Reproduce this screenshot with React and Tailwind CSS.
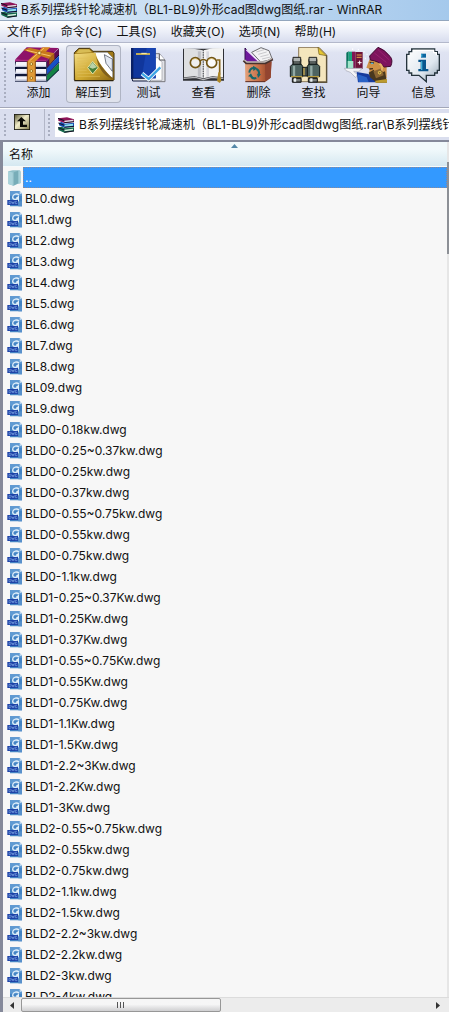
import React, { useState } from 'react';

const files = [
  'BL0.dwg', 'BL1.dwg', 'BL2.dwg', 'BL3.dwg', 'BL4.dwg', 'BL5.dwg', 'BL6.dwg', 'BL7.dwg', 'BL8.dwg',
  'BL09.dwg', 'BL9.dwg',
  'BLD0-0.18kw.dwg', 'BLD0-0.25~0.37kw.dwg', 'BLD0-0.25kw.dwg', 'BLD0-0.37kw.dwg',
  'BLD0-0.55~0.75kw.dwg', 'BLD0-0.55kw.dwg', 'BLD0-0.75kw.dwg', 'BLD0-1.1kw.dwg',
  'BLD1-0.25~0.37Kw.dwg', 'BLD1-0.25Kw.dwg', 'BLD1-0.37Kw.dwg', 'BLD1-0.55~0.75Kw.dwg',
  'BLD1-0.55Kw.dwg', 'BLD1-0.75Kw.dwg', 'BLD1-1.1Kw.dwg', 'BLD1-1.5Kw.dwg',
  'BLD1-2.2~3Kw.dwg', 'BLD1-2.2Kw.dwg', 'BLD1-3Kw.dwg',
  'BLD2-0.55~0.75kw.dwg', 'BLD2-0.55kw.dwg', 'BLD2-0.75kw.dwg', 'BLD2-1.1kw.dwg',
  'BLD2-1.5kw.dwg', 'BLD2-2.2~3kw.dwg', 'BLD2-2.2kw.dwg', 'BLD2-3kw.dwg', 'BLD2-4kw.dwg',
];

const menus = ['文件(F)', '命令(C)', '工具(S)', '收藏夹(O)', '选项(N)', '帮助(H)'];

function BooksIcon() {
  return (
    <svg className="h-4 w-[18px] shrink-0" viewBox="0 0 54 48" aria-hidden="true">
      <path d="M4 4 L30 1 L51 7 V15 L22 18 L4 11Z" fill="#8d1458" />
      <path d="M22 11 L49 8 V14 L22 16Z" fill="#e7dce4" />
      <path d="M6 17 L14 15 L24 20 L51 17 V29 L22 32 L6 25Z" fill="#164fb5" />
      <path d="M22 23 L48 20 V26 L22 29Z" fill="#8fe2ec" />
      <path d="M4 31 L14 29 L24 34 L51 31 V43 L22 47 L4 39Z" fill="#12664a" />
      <path d="M22 38 L48 35 V40 L22 43Z" fill="#d9f0e0" />
      <path d="M3 4 L22 11 M4 18 L22 25 M3 32 L22 39 M22 17 L51 14 M22 31 L51 28 M22 46 L51 42" stroke="#171126" strokeWidth="3" fill="none" />
    </svg>
  );
}

function FolderIcon() {
  return (
    <svg className="h-4 w-4 shrink-0" viewBox="0 0 48 48" aria-hidden="true">
      <path d="M4 4 L17 1 H37 Q41 2 41 6 V40 L31 42 L20 47 L4 42Z" fill="#8fbfc9" />
      <path d="M4 4 L19 8 V47 L4 42Z" fill="#a9d2da" />
      <path d="M21 7 L33 2 V40 L21 46Z" fill="#78adb8" />
      <path d="M35 4 H40 V39 L35 40Z" fill="#a6d0d8" />
      <path d="M19 8 V47" stroke="#8ab6c0" strokeWidth="2" />
    </svg>
  );
}

function DwgIcon() {
  return (
    <svg className="h-4 w-4 shrink-0" viewBox="0 0 48 48" aria-hidden="true">
      <path d="M9 1 H38 L45 8 V46 H9Z" fill="#4484c4" />
      <path d="M9 1 H38 L45 8 V14 H9Z" fill="#5f9ad2" />
      <path d="M38 1 L45 8 H38Z" fill="#d3e6f7" />
      <path d="M36 12 C31 7 18 8 17 18 C17 27 29 28 33 20 L28 20 M34 14 V28 C33 36 26 36 23 34" fill="none" stroke="#e0effa" strokeWidth="4" />
      <path d="M34 31 H45 V46 H34Z" fill="#5790cb" />
      <rect x="1" y="27" width="32" height="15" fill="#1c41a6" />
      <path d="M6 31 V38 H10 L12 35 L10 31Z M14 31 L16 38 L18 33 L20 38 L22 31 M30 31 H25 V38 H30 V35" fill="none" stroke="#7ea6e4" strokeWidth="2" />
    </svg>
  );
}

function AddArt() {
  return (
    <>
      <path d="M80 142 L176 144 L140 183 L45 179Z" fill="#8e1269" />
      <path d="M140 183 L177 145 V165 L140 204Z" fill="#5f0b50" />
      <path d="M140 205 L177 167 V187 L140 224Z" fill="#1650c8" />
      <path d="M140 226 L177 189 V210 L140 245Z" fill="#138244" />
      <path d="M140 204 L177 165 M140 225 L177 187 M140 245 L177 209" stroke="#0b1038" strokeWidth="3" />
      <path d="M45 180 H140 V245 H45Z" fill="#101838" />
      <path d="M48 186 H138 V201 H45Z M48 207 H138 V222 H45Z M48 229 H138 V242 H45Z" fill="#f4f4fa" />
      <path d="M45 199 H138 M45 220 H138 M45 240 H138" stroke="#b5b9cf" strokeWidth="3" />
      <path d="M45 182 H140" stroke="#b02a84" strokeWidth="5" />
      <path d="M83 182 L128 142 H151 L107 184Z" fill="#d98a24" />
      <path d="M70 150 L88 143 L163 160 L146 176Z" fill="#c87a1c" />
      <path d="M82 183 H106 V245 H82Z" fill="#e09a36" />
      <path d="M82 183 V245 M106 183 V245" stroke="#8d4f12" strokeWidth="3" />
      <path d="M148 174 L163 160 V178 L148 194Z" fill="#a96113" />
      <path d="M88 183 L132 144 M80 151 L152 168" stroke="#f7c46a" strokeWidth="3" />
      <g fill="#fff3a6" stroke="#805006" strokeWidth="2">
        <circle cx="94" cy="192" r="4" />
        <circle cx="94" cy="213" r="4" />
        <circle cx="94" cy="234" r="4" />
        <circle cx="118" cy="159" r="5" />
      </g>
    </>
  );
}

function ExtractArt() {
  return (
    <>
      <defs>
        <linearGradient id="gold" x1="0" y1="0" x2="1" y2="1">
          <stop offset="0" stopColor="#f3dc82" />
          <stop offset="0.55" stopColor="#cda62e" />
          <stop offset="1" stopColor="#8a6410" />
        </linearGradient>
      </defs>
      <path d="M223 158 L237 145 H269 L279 154 H338 L342 160 V240 H223Z" fill="#a17a18" stroke="#40300a" strokeWidth="3" />
      <path d="M282 157 H322 L338 173 V232 H300Z" fill="#fff" stroke="#7c808c" strokeWidth="2" />
      <path d="M313 164 L337 177 V214 L318 190Z" fill="#e2e8f2" stroke="#38404e" strokeWidth="2" />
      <path d="M223 162 L287 158 C289 180 316 215 341 238 L338 243 H226Z" fill="url(#gold)" />
      <path d="M285 158 C289 180 315 217 341 238 C318 233 304 215 295 196Z" fill="#80601c" />
      <path d="M238 148 H267 L276 157 L228 160Z" fill="#d8bc55" />
      <path d="M232 175 H272 M232 184 H262 M232 193 H258 M232 202 H255 M232 211 H260 M232 220 H275 M232 229 H300" stroke="#dfc05a" strokeWidth="2" />
      <path d="M278 184 L294 203 L278 222 L263 203Z" fill="#47813a" stroke="#e8e0a5" strokeWidth="3" />
      <path d="M278 187 L290 202 L278 206 L267 202Z" fill="#b9d2a8" />
      <path d="M223 242 H340" stroke="#2d230b" strokeWidth="4" />
    </>
  );
}

function TestArt() {
  return (
    <>
      <path d="M446 161 H478 L495 180 V245 H446Z" fill="#e2e3e8" stroke="#77777d" strokeWidth="3" />
      <path d="M455 173 H474 L486 187 V241 H455Z" fill="#fff" stroke="#9a9aa2" strokeWidth="2" />
      <path d="M478 161 V180 H495" fill="#fff" stroke="#4f5056" strokeWidth="3" />
      <path d="M393 144 H467 V235 H393Z" fill="#10369c" />
      <path d="M393 144 H400 V237 H393Z" fill="#092065" />
      <path d="M440 144 H467 V235 H425Z" fill="#1743b1" />
      <path d="M396 235 H450 V243 H398Z" fill="#e4e4e4" stroke="#111a40" strokeWidth="3" />
      <path d="M408 162 H450" stroke="#e5c34a" strokeWidth="5" />
      <path d="M424 160 H440" stroke="#fff5b5" strokeWidth="3" />
      <path d="M426 221 L446 237 L481 202" fill="none" stroke="#fff" strokeWidth="12" />
      <path d="M426 221 L446 237 L481 202" fill="none" stroke="#3ca5e4" strokeWidth="7" />
    </>
  );
}

function ViewArt() {
  return (
    <>
      <path d="M549 146 H672 V242 H549Z" fill="#2f3035" />
      <path d="M552 144 L580 146 L610 151 V235 L584 229 L552 232Z" fill="#dedfe1" />
      <path d="M610 151 L638 145 L669 144 V232 L637 229 L610 235Z" fill="#f2f2f2" />
      <path d="M551 235 L587 232 L610 239 L635 232 L670 235" fill="none" stroke="#b9b9bb" strokeWidth="4" />
      <path d="M610 149 V240" stroke="#66676b" strokeWidth="4" strokeDasharray="4 3" />
      <path d="M598 154 V230" stroke="#bfc0c5" strokeWidth="9" />
      <path d="M623 154 V230" stroke="#d6d7dc" strokeWidth="8" />
      <path d="M600 183 Q610 174 620 183" fill="none" stroke="#725514" strokeWidth="5" />
      <circle cx="586" cy="188" r="15" fill="#eee" stroke="#715414" strokeWidth="5" />
      <circle cx="635" cy="188" r="15" fill="#fafafa" stroke="#715414" strokeWidth="5" />
      <path d="M576 179 Q586 172 594 179 M625 179 Q635 172 643 179" fill="none" stroke="#e8c565" strokeWidth="2" />
      <path d="M650 180 H659 V224" fill="none" stroke="#89651a" strokeWidth="5" />
      <path d="M655 217 L651 243 L659 249 L664 243 L660 217Z" fill="#ac8627" />
    </>
  );
}

function DeleteArt() {
  return (
    <>
      <defs>
        <linearGradient id="bin" x1="0" y1="0" x2="1" y2="0">
          <stop offset="0" stopColor="#e3a27c" />
          <stop offset="0.55" stopColor="#c46c44" />
          <stop offset="1" stopColor="#8a3c22" />
        </linearGradient>
      </defs>
      <path d="M60 144 L103 187 H60Z" fill="#6e1a9c" stroke="#35104f" strokeWidth="3" />
      <path d="M64 149 L103 186" stroke="#f6e7ff" strokeWidth="4" />
      <path d="M80 157 L108 143 L132 152 L142 178 L107 186Z" fill="#f3f3f4" stroke="#6e6e72" strokeWidth="3" />
      <path d="M94 156 L117 149 M100 163 L125 156 M106 170 L131 164 M111 177 L136 171" stroke="#b2b2b7" strokeWidth="2" />
      <path d="M60 190 H122 L139 184 L137 233 L121 245 H61Z" fill="url(#bin)" />
      <path d="M120 192 L140 184 L137 233 L121 245Z" fill="#934530" />
      <path d="M56 181 L64 189 H121 L143 177" fill="none" stroke="#47322e" strokeWidth="8" />
      <path d="M58 179 L66 186 H119 L141 175" fill="none" stroke="#c2bab8" strokeWidth="4" />
      <g fill="none" stroke="#16676b" strokeWidth="6">
        <path d="M73 218 Q74 204 87 204" />
        <path d="M94 207 Q104 211 102 224" />
        <path d="M94 234 Q82 238 77 228" />
      </g>
      <path d="M84 197 L97 205 L85 213Z M96 221 L108 223 L99 234Z M69 229 L78 220 L84 232Z" fill="#16676b" />
      <path d="M61 245 H120" stroke="#5b281e" strokeWidth="3" />
    </>
  );
}

function FindArt() {
  return (
    <>
      <path d="M221 142 H282 L304 164 V245 H221Z" fill="#f4e6bd" stroke="#8c7958" strokeWidth="3" />
      <path d="M279 142 L304 167 L282 163Z" fill="#e5c633" stroke="#6d5716" strokeWidth="2" />
      <path d="M305 166 V247 H275" fill="none" stroke="#5d5339" strokeWidth="4" />
      <path d="M202 178 H229 V248 H202Z M250 178 H277 V248 H250Z" fill="#292c2b" />
      <path d="M204 172 H227 V185 H204Z M252 172 H275 V185 H252Z" fill="#aeb3b1" stroke="#20211f" strokeWidth="3" />
      <path d="M207 183 H224 V195 H207Z M255 183 H272 V195 H255Z" fill="#59605e" />
      <rect x="228" y="202" width="24" height="26" fill="#45504d" stroke="#171b1a" strokeWidth="3" />
      <path d="M196 199 L202 193 H229 L233 199 V230 H196Z M247 199 L251 193 H278 L284 199 V230 H247Z" fill="#4e6461" stroke="#101817" strokeWidth="3" />
      <path d="M207 197 V228 M259 197 V228" stroke="#93aaa5" strokeWidth="7" />
      <path d="M198 230 H232 M248 230 H282" stroke="#b69a3c" strokeWidth="4" />
      <path d="M202 235 H228 V246 H202Z M250 235 H277 V246 H250Z" fill="#797e7c" stroke="#171717" strokeWidth="3" />
      <path d="M210 235 V245 M259 235 V245" stroke="#e9eeee" strokeWidth="7" />
      <path d="M237 204 V226" stroke="#c7aa4d" strokeWidth="4" />
    </>
  );
}

function WizardArt() {
  return (
    <>
      <path d="M364 158 L371 154 V207 H364Z" fill="#06725a" />
      <path d="M371 155 H381 V207 H371Z" fill="#18a47d" />
      <path d="M381 155 H391 V207 H381Z" fill="#821654" />
      <path d="M391 156 H413 V207 H391Z" fill="#6e1439" />
      <path d="M395 165 H410 M395 172 H410" stroke="#e9a64a" strokeWidth="3" />
      <path d="M368 183 H385 V204 H368Z" fill="#a2e6cc" />
      <path d="M358 205 H412 L402 214 H386 L397 224 L392 233 L376 217 L363 212Z" fill="#f4f4f7" stroke="#a5a8b5" strokeWidth="2" />
      <path d="M395 216 L430 222 L457 247 H399Z" fill="#163b9d" />
      <path d="M398 223 L425 232 L431 246 H401Z" fill="#2962c6" />
      <path d="M433 179 L459 169 L485 185 V234 L455 238 L432 218 L434 207 L424 203Z" fill="#ce9146" />
      <path d="M431 218 L446 209 L455 225 L480 214 L486 248 H455 L435 232Z" fill="#49381e" />
      <path d="M445 214 L470 205 L476 226 L453 235Z" fill="#8a6533" />
      <path d="M434 187 L447 189 M433 207 L444 206" stroke="#462e1d" strokeWidth="4" />
      <path d="M438 190 H445" stroke="#52b1dc" strokeWidth="4" />
      <path d="M459 142 Q478 148 496 170 Q505 181 497 199 L478 201 Q462 183 436 180 L434 168Z" fill="#7e145d" stroke="#3e082f" strokeWidth="3" />
      <path d="M448 159 L484 187 M459 149 L493 180" stroke="#97216f" strokeWidth="3" />
      <path d="M463 191 Q475 198 470 212" fill="none" stroke="#e5b66a" strokeWidth="6" />
      <circle cx="464" cy="218" r="4" fill="none" stroke="#f2d553" strokeWidth="3" />
      <path d="M451 242 L486 237 V248 H451Z" fill="#bc9b2f" />
      <path d="M404 182 V194 M398 188 H410 M383 145 V150 M400 147 V151 M417 153 V158 M421 173 V178 M426 161 V165" stroke="#fff" strokeWidth="3" />
    </>
  );
}

function InfoArt() {
  return (
    <>
      <defs>
        <linearGradient id="bubble" x1="0" y1="0" x2="1" y2="1">
          <stop offset="0" stopColor="#fff" />
          <stop offset="0.6" stopColor="#dfe7ef" />
          <stop offset="1" stopColor="#92a3b2" />
        </linearGradient>
      </defs>
      <path d="M560 147 H629 V155 H637 V163 H643 V211 H637 V219 H629 V226 H604 V245 L582 226 H560 V219 H552 V211 H545 V163 H552 V155 H560Z" fill="url(#bubble)" stroke="#25343d" strokeWidth="4" />
      <path d="M564 151 H626 V158 H634 V166" fill="none" stroke="#fff" strokeWidth="4" />
      <rect x="588" y="161" width="15" height="12" fill="#0b66a0" />
      <path d="M580 179 H603 V207 H610 V214 H580 V207 H587 V186 H580Z" fill="#08568d" />
      <path d="M590 163 V170 M590 184 V210" stroke="#46b2d7" strokeWidth="4" />
    </>
  );
}

const tools = [
  { label: '添加', viewBox: '33 141 165 108', Art: AddArt },
  { label: '解压到', viewBox: '198 141 165 108', Art: ExtractArt },
  { label: '测试', viewBox: '363 141 165 108', Art: TestArt },
  { label: '查看', viewBox: '528 141 165 108', Art: ViewArt },
  { label: '删除', viewBox: '18 141 165 108', Art: DeleteArt },
  { label: '查找', viewBox: '183 141 165 108', Art: FindArt },
  { label: '向导', viewBox: '348 141 165 108', Art: WizardArt },
  { label: '信息', viewBox: '513 141 165 108', Art: InfoArt },
];

function Grip() {
  return (
    <div className="my-1 w-1 shrink-0 self-stretch bg-[radial-gradient(circle_at_center,#a9aec0_1px,transparent_1px)] bg-[length:4px_4px]" />
  );
}

function App() {
  const [path, setPath] = useState('B系列摆线针轮减速机（BL1-BL9)外形cad图dwg图纸.rar\\B系列摆线针轮减速机');

  return (
    <div className="flex h-screen flex-col overflow-hidden bg-[#d5d9ec] font-['Inter','Noto_Sans_CJK_SC',sans-serif] text-xs text-[#111]">
      <header className="flex h-[21px] shrink-0 items-center gap-[3px] overflow-hidden border-b border-[#93a6bd] bg-linear-to-r from-[#dceaf7] via-[#c2daf2] to-[#a5c9ec] whitespace-nowrap">
        <BooksIcon />
        <h1>B系列摆线针轮减速机（BL1-BL9)外形cad图dwg图纸.rar - WinRAR</h1>
      </header>

      <nav className="flex h-[22px] shrink-0 items-center gap-3.5 overflow-hidden border-b border-[#b3b8cb] bg-linear-to-b from-white via-[#eceff8] to-[#d8ddee] px-[7px] whitespace-nowrap">
        {menus.map((item) => (
          <button key={item} type="button" className="shrink-0">{item}</button>
        ))}
      </nav>

      <div className="flex h-[65px] shrink-0 border-b border-[#a3a7b8] bg-linear-to-b from-[#fafbfe] from-0% via-[#dfe3f2] via-15% to-[#d3d8ec] pl-[3px]">
        <Grip />
        <div className="flex overflow-hidden pt-0.5 pl-1">
          {tools.map(({ label, viewBox, Art }) => (
            <button
              key={label}
              type="button"
              className={
                label === '解压到'
                  ? 'flex h-[58px] w-[55px] shrink-0 flex-col items-center gap-0.5 rounded-sm bg-[#dfe2ec] pt-0.5 inset-ring inset-ring-[#afb4c3]'
                  : 'flex h-[58px] w-[55px] shrink-0 flex-col items-center gap-0.5 pt-0.5'
              }
            >
              <svg className="h-9 w-[55px] shrink-0" viewBox={viewBox} aria-hidden="true">
                <Art />
              </svg>
              {label}
            </button>
          ))}
        </div>
      </div>

      <div className="flex h-8 shrink-0 items-center border-t border-white bg-[#dadeee] pl-[3px]">
        <Grip />
        <div className="flex w-[38px] shrink-0 items-start justify-center self-stretch border-r border-[#b3b7c8] pt-[5px] pr-2">
          <button type="button" aria-label="向上">
            <svg className="h-4 w-4" viewBox="0 0 48 48" aria-hidden="true">
              <defs>
                <linearGradient id="up" x1="0" y1="0" x2="1" y2="1">
                  <stop offset="0" stopColor="#55522f" />
                  <stop offset="0.45" stopColor="#f1edca" />
                  <stop offset="1" stopColor="#827c4f" />
                </linearGradient>
              </defs>
              <rect x="1" y="1" width="46" height="46" fill="url(#up)" stroke="#16160e" strokeWidth="3" />
              <path d="M22 9 L36 22 H27 V32 H39 V39 H18 V22 H9Z" fill="#0c0c08" />
            </svg>
          </button>
        </div>
        <div className="flex w-1.5 shrink-0 justify-center self-stretch pl-0.5">
          <Grip />
        </div>
        <label className="ml-1 flex h-6 min-w-0 flex-1 items-center gap-1 overflow-hidden bg-white pl-0.5">
          <BooksIcon />
          <input
            aria-label="路径"
            className="min-w-0 flex-1 bg-transparent outline-none"
            value={path}
            onChange={(e) => setPath(e.target.value)}
          />
        </label>
      </div>

      <main className="flex min-h-0 flex-1 flex-col border-t-2 border-l-3 border-[#85899a] bg-[#f7f7f7]">
        <div className="flex min-h-0 flex-1">
          <div className="min-w-0 flex-1 overflow-hidden">
            <table className="w-full border-separate border-spacing-0">
              <thead>
                <tr>
                  <th className="relative h-[25px] border-b border-[#f5fafb] bg-linear-to-b from-[#f1f9fb] from-30% to-[#d5e8f1] p-0 pt-0.5 pl-1.5 text-left font-normal">
                    <button type="button">名称</button>
                    <svg className="absolute top-0.5 left-[228px] h-1 w-[7px]" viewBox="0 0 7 4" aria-hidden="true">
                      <path d="M0 4 L3.5 0 L7 4Z" fill="#5288a8" />
                    </svg>
                  </th>
                </tr>
              </thead>
              <tbody>
                <tr>
                  <td className="p-0">
                    <div className="flex h-[21px] items-center pl-1">
                      <FolderIcon />
                      <span className="flex h-[21px] flex-1 items-center border border-dotted border-[#8a8798] bg-[#3399ff] pl-px text-white">..</span>
                    </div>
                  </td>
                </tr>
                {files.map((name) => (
                  <tr key={name}>
                    <td className="p-0">
                      <div className="flex h-[21px] items-center gap-0.5 pl-1">
                        <DwgIcon />
                        {name}
                      </div>
                    </td>
                  </tr>
                ))}
              </tbody>
            </table>
          </div>
          <div className="w-0.5 shrink-0 bg-[#e6e6e6] pt-5">
            <div className="h-[92px] bg-[#8d9096]" />
          </div>
        </div>

        <div className="flex h-[15px] shrink-0 items-stretch border-t border-[#dcdcdc] bg-[#ececec]">
          <button type="button" aria-label="向左滚动" className="flex w-[18px] items-center justify-center">
            <svg className="h-[7px] w-1" viewBox="0 0 4 7" aria-hidden="true">
              <path d="M4 0 V7 L0 3.5Z" fill="#333" />
            </svg>
          </button>
          <div className="flex-1">
            <div className="flex h-full w-[49%] items-center justify-center gap-0.5 rounded-xs border border-[#979797] bg-linear-to-b from-[#f6f6f6] from-45% to-[#cfcfd1]">
              <i className="h-1.5 w-px bg-[#555]" />
              <i className="h-1.5 w-px bg-[#555]" />
              <i className="h-1.5 w-px bg-[#555]" />
            </div>
          </div>
          <button type="button" aria-label="向右滚动" className="mr-0.5 flex w-[18px] items-center justify-center">
            <svg className="h-[7px] w-1" viewBox="0 0 4 7" aria-hidden="true">
              <path d="M0 0 V7 L4 3.5Z" fill="#333" />
            </svg>
          </button>
        </div>
      </main>
    </div>
  );
}

export default App;
